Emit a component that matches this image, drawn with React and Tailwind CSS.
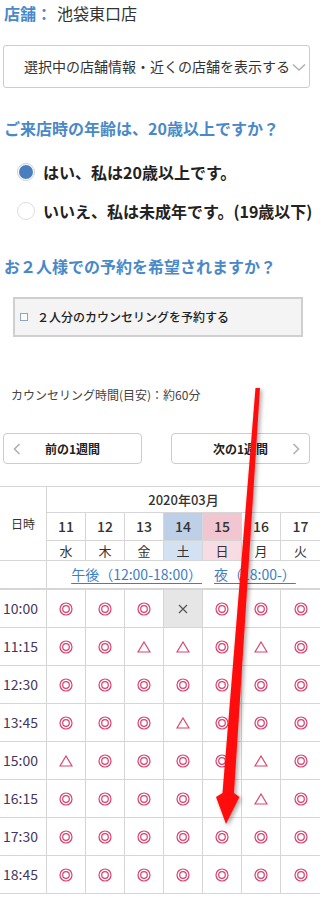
import React from "react";

const BLUE = "#4a89c8";

function DoubleCircle() {
  return (
    <svg width="14" height="14" viewBox="0 0 14 14">
      <circle cx="7" cy="7" r="6" fill="none" stroke="#d9406e" strokeWidth="1.2" />
      <circle cx="7" cy="7" r="3.3" fill="none" stroke="#d9406e" strokeWidth="1.2" />
    </svg>
  );
}

function Triangle() {
  return (
    <svg width="14" height="12" viewBox="0 0 14 12">
      <polygon points="7,1 13,11 1,11" fill="none" stroke="#d9466e" strokeWidth="1.2" strokeLinejoin="miter" />
    </svg>
  );
}

function Cross() {
  return (
    <svg width="10" height="10" viewBox="0 0 10 10">
      <path d="M1 1 L9 9 M9 1 L1 9" stroke="#555" strokeWidth="1.2" />
    </svg>
  );
}

function ChevronDown() {
  return (
    <svg width="14" height="9" viewBox="0 0 14 9">
      <path d="M1 1.5 L7 7 L13 1.5" fill="none" stroke="#b0b0b0" strokeWidth="1.6" />
    </svg>
  );
}

function ChevronSide({ dir }) {
  return (
    <svg width="8" height="12" viewBox="0 0 8 12">
      {dir === "left" ? (
        <path d="M6.5 1 L1.5 6 L6.5 11" fill="none" stroke="#b0b0b0" strokeWidth="1.6" />
      ) : (
        <path d="M1.5 1 L6.5 6 L1.5 11" fill="none" stroke="#b0b0b0" strokeWidth="1.6" />
      )}
    </svg>
  );
}

const days = [
  { d: "11", w: "水", dbg: "", wbg: "" },
  { d: "12", w: "木", dbg: "", wbg: "" },
  { d: "13", w: "金", dbg: "", wbg: "" },
  { d: "14", w: "土", dbg: "bg-[#bdd0e8]", wbg: "bg-[#d3e2f2]" },
  { d: "15", w: "日", dbg: "bg-[#f2c6d0]", wbg: "bg-[#f7dce4]" },
  { d: "16", w: "月", dbg: "", wbg: "" },
  { d: "17", w: "火", dbg: "", wbg: "" },
];

const rows = [
  ["10:00", "ooo×ooo"],
  ["11:15", "oo△△o△o"],
  ["12:30", "ooooooo"],
  ["13:45", "ooo△ooo"],
  ["15:00", "△oooo△o"],
  ["16:15", "oooo-△o"],
  ["17:30", "ooooooo"],
  ["18:45", "ooooooo"],
];

function Sym({ s }) {
  if (s === "o") return <DoubleCircle />;
  if (s === "△") return <Triangle />;
  if (s === "×") return <Cross />;
  return null;
}

export default function App() {
  return (
    <div className="relative w-[320px] bg-white text-[#333] font-['Noto_Sans_CJK_JP',sans-serif]">
      <div className="pt-[3px] pl-[4px] leading-[20px] text-[16px] flex">
        <span className="font-bold" style={{ color: BLUE }}>店舗：</span>
        <span className="ml-[5px] text-[#333]">池袋東口店</span>
      </div>

      <div className="mt-[22px] mx-[3px] w-[307px] h-[43px] border border-[#cccccc] rounded-[3px] flex items-center pl-[20px] pr-[7px]">
        <span className="text-[14px] whitespace-nowrap text-[#333]">選択中の店舗情報・近くの店舗を表示する</span>
        <span className="ml-[2px] mt-[1px] flex"><ChevronDown /></span>
      </div>

      <div className="mt-[30px] pl-[4px] leading-[20px] text-[16px] font-bold" style={{ color: BLUE }}>
        ご来店時の年齢は、20歳以上ですか？
      </div>

      <div className="mt-[24px] h-[20px] flex items-center pl-[17px]">
        <span className="w-[18px] h-[18px] rounded-full border border-[#d0d0d0] bg-white flex items-center justify-center">
          <span className="w-[14px] h-[14px] rounded-full bg-[#4a7fbf]" />
        </span>
        <span className="ml-[8px] text-[16px] font-bold whitespace-nowrap text-[#222]">はい、私は20歳以上です。</span>
      </div>

      <div className="mt-[19px] h-[20px] flex items-center pl-[17px]">
        <span className="w-[18px] h-[18px] rounded-full border border-[#dddddd] bg-white" />
        <span className="ml-[8px] text-[16px] font-bold whitespace-nowrap text-[#222]">いいえ、私は未成年です。(19歳以下)</span>
      </div>

      <div className="mt-[35px] pl-[4px] leading-[20px] text-[16px] font-bold" style={{ color: BLUE }}>
        お２人様での予約を希望されますか？
      </div>

      <div className="mt-[21px] ml-[13px] w-[290px] h-[40px] border-2 border-[#cfcfcf] bg-[#f4f4f4] flex items-center pl-[5px]">
        <span className="w-[8px] h-[8px] border border-[#8aa6c8] bg-white" />
        <span className="ml-[9px] text-[12px] font-medium text-[#222] whitespace-nowrap">２人分のカウンセリングを予約する</span>
      </div>

      <div className="mt-[50px] ml-[11px] leading-[16px] text-[12px] text-[#444]">
        カウンセリング時間(目安)：約60分
      </div>

      <div className="mt-[30px] mx-[3px] w-[307px] flex justify-between">
        <div className="w-[139px] h-[31px] border border-[#cccccc] rounded-[4px] grid grid-cols-[8px_1fr_8px] items-center px-[9px]">
          <ChevronSide dir="left" />
          <span className="text-center text-[12px] font-bold text-[#222]">前の1週間</span>
          <span />
        </div>
        <div className="w-[139px] h-[31px] border border-[#cccccc] rounded-[4px] grid grid-cols-[8px_1fr_8px] items-center px-[9px]">
          <span />
          <span className="text-center text-[12px] font-bold text-[#222]">次の1週間</span>
          <ChevronSide dir="right" />
        </div>
      </div>

      <div className="mt-[22px] border-t border-[#d6d6d6] grid grid-cols-[47px_repeat(7,1fr)] text-[#333]">
        <div className="row-span-3 border-r border-b border-[#d6d6d6] flex items-center justify-center text-[12px]">
          日時
        </div>
        <div className="col-span-7 h-[26px] border-b border-[#d6d6d6] flex items-center justify-center text-[13px] font-medium">
          2020年03月
        </div>
        {days.map((d, i) => (
          <div
            key={"d" + i}
            className={`h-[28px] border-b border-[#d6d6d6] flex items-center justify-center text-[14px] font-medium ${i < 6 ? "border-r" : ""} ${d.dbg}`}
          >
            {d.d}
          </div>
        ))}
        {days.map((d, i) => (
          <div
            key={"w" + i}
            className={`h-[20px] border-b border-[#d6d6d6] flex items-center justify-center text-[13px] ${i < 6 ? "border-r" : ""} ${d.wbg}`}
          >
            {d.w}
          </div>
        ))}
        <div className="h-[29px] border-r border-b-2 border-[#d6d6d6]" />
        <div className="col-span-7 h-[29px] border-b-2 border-[#d6d6d6] flex items-center justify-center gap-[12px] text-[14px] text-[#3d7ec4]">
          <span className="underline underline-offset-[3px] whitespace-nowrap">午後（12:00-18:00）</span>
          <span className="underline underline-offset-[3px] whitespace-nowrap">夜（18:00-）</span>
        </div>
        {rows.map(([t, syms]) => (
          <React.Fragment key={t}>
            <div className="h-[38px] border-r border-b border-[#d6d6d6] flex items-center pl-[3px] text-[14px] text-[#46375f]">
              {t}
            </div>
            {Array.from(syms).map((s, i) => (
              <div
                key={t + i}
                className={`h-[38px] border-b border-[#d6d6d6] flex items-center justify-center ${i < 6 ? "border-r" : ""} ${s === "×" ? "bg-[#e6e6e6]" : ""}`}
              >
                <Sym s={s} />
              </div>
            ))}
          </React.Fragment>
        ))}
      </div>

      <svg
        className="absolute left-0 top-0 pointer-events-none"
        width="320"
        height="898"
        viewBox="0 0 320 898"
      >
        <defs>
          <filter id="shadow" x="-50%" y="-10%" width="200%" height="120%">
            <feDropShadow dx="2" dy="2" stdDeviation="2" floodColor="#000" floodOpacity="0.35" />
          </filter>
        </defs>
        <polygon
          points="255.5,388 260,388 234,793 239.5,797 226,824 216,797 222.5,793"
          fill="#ff0a0a"
          filter="url(#shadow)"
        />
      </svg>
    </div>
  );
}
